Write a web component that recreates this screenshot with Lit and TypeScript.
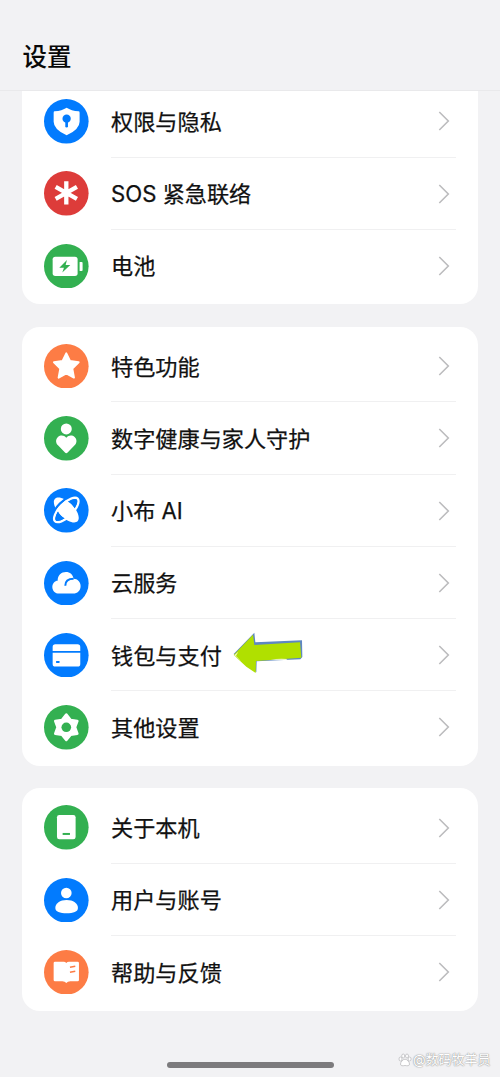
import { LitElement, html, css, svg } from "lit";
import { customElement, property } from "lit/decorators.js";

const BLUE = "#027bfe";
const GREEN = "#33b051";
const RED = "#dd3c3a";
const ORANGE = "#fd7c45";

const glyphs: Record<string, { color: string; art: unknown }> = {
  privacy: {
    color: BLUE,
    art: svg`<path d="M68 26 Q82 35 104 37 Q107 37 107 41 V68 Q107 91 68 109 Q29 91 29 68 V41 Q29 37 32 37 Q54 35 68 26Z"/>
      <circle cx="68" cy="59" r="12.5" fill=${BLUE}/><path d="M68 62V82" stroke=${BLUE} stroke-width="8" stroke-linecap="round"/>`,
  },
  sos: {
    color: RED,
    art: svg`<path d="M67 31V101M35 48L99 84M99 48L35 84" stroke="#fff" stroke-width="13"/>`,
  },
  battery: {
    color: GREEN,
    art: svg`<rect x="26" y="38" width="75" height="58" rx="8"/><path d="M107 54H113Q116 54 116 57V78Q116 81 113 81H107Z"/>
      <path d="M69 48L46 71H60L55 86L79 63H65Z" fill=${GREEN}/>`,
  },
  star: {
    color: ORANGE,
    art: svg`<path d="M67 28L78 51L104 55L85 74L90 101L67 88L44 101L49 74L30 55L56 51Z" stroke="#fff" stroke-width="6" stroke-linejoin="round"/>`,
  },
  family: {
    color: GREEN,
    art: svg`<circle cx="67" cy="39" r="16.5"/><path d="M67 65C60 57 49 57 42 63C34 71 35 81 42 88L63 110Q67 114 71 110L92 88C99 81 100 71 92 63C85 57 74 57 67 65Z"/>`,
  },
  assistant: {
    color: BLUE,
    art: svg`<g transform="rotate(45 67 66)">
        <path d="M19 66C19 55 38 43 67 43S115 55 115 66C115 77 96 89 67 89S19 77 19 66Z"/>
      </g>
      <g transform="rotate(-45 67 66)">
        <path d="M14 61C24 47 43 39 67 39S110 47 120 61" stroke=${BLUE} stroke-width="7" fill="none"/>
        <path d="M19 66C19 56 39 46 67 46S115 56 115 66S95 86 67 86S19 76 19 66Z" stroke="#fff" stroke-width="7" fill="none"/>
        <path d="M23 66Q25 57 46 52Q40 66 46 80Q25 75 23 66ZM111 66Q109 57 88 52Q94 66 88 80Q109 75 111 66Z" fill=${BLUE}/>
      </g>`,
  },
  cloud: {
    color: BLUE,
    art: svg`<path d="M46 98C33 98 25 89 25 78C25 67 33 59 41 59C41 43 52 33 66 33C78 33 87 41 89 53C101 53 110 63 110 75C110 89 100 98 88 98Z"/>
      <path d="M64 74C64 59 74 53 89 53" stroke=${BLUE} stroke-width="6" fill="none"/>`,
  },
  wallet: {
    color: BLUE,
    art: svg`<path d="M26 54V42Q26 34 34 34H101Q109 34 109 42V54ZM26 59H109V93Q109 101 101 101H34Q26 101 26 93Z"/>
      <rect x="36" y="84" width="11" height="6" rx="2" fill=${BLUE}/>`,
  },
  gear: {
    color: GREEN,
    art: svg`<path d="M67 29L80 45L100 48L93 67L100 86L80 89L67 105L54 89L34 86L41 67L34 48L54 45Z" stroke="#fff" stroke-width="8" stroke-linejoin="round"/>
      <circle cx="67" cy="67" r="14.5" fill=${GREEN}/>`,
  },
  device: {
    color: GREEN,
    art: svg`<rect x="39" y="30" width="56" height="73" rx="7"/><rect x="56" y="84" width="22" height="6" fill=${GREEN}/>`,
  },
  user: {
    color: BLUE,
    art: svg`<circle cx="67" cy="45" r="16"/><path d="M34 90C34 76 48 66 68 66S102 76 102 90C102 101 88 106 68 106S34 101 34 90Z"/>`,
  },
  help: {
    color: ORANGE,
    art: svg`<path d="M33 35H59Q64 35 67 39Q70 35 75 35H101Q105 35 105 39V90Q105 94 101 94H79Q71 94 67 99Q63 94 55 94H33Q29 94 29 90V39Q29 35 33 35Z"/>
      <path d="M78 52L94 49M78 67L94 64" stroke=${ORANGE} stroke-width="5"/>`,
  },
};

@customElement("settings-row")
class SettingsRow extends LitElement {
  @property() icon = "";
  @property() label = "";

  static styles = css`
    :host { display: flex; align-items: center; height: 72.25px; padding-left: 22.2px; }
    .badge { width: 44.6px; height: 44.6px; flex: none; margin-right: 22px; }
    .body {
      flex: 1; height: 100%; margin-right: 22px; box-sizing: border-box;
      display: flex; align-items: center; border-bottom: 1px solid #f0f0f1;
    }
    :host([last]) .body { border-bottom-color: transparent; }
    .label { font-size: 22.15px; line-height: 32px; padding-top: 2px; white-space: pre; color: #111; font-weight: 400; -webkit-text-stroke: 0.25px #111; }
    .chevron { width: 12px; height: 20px; margin: 1px 5.4px 0 auto; flex: none; }
  `;

  render() {
    const glyph = glyphs[this.icon];
    return html`
      <svg class="badge" viewBox="0 0 134 134" fill="#fff">
        <circle cx="67" cy="67" r="67" fill=${glyph.color} />${glyph.art}
      </svg>
      <div class="body">
        <span class="label">${this.label}</span><slot></slot>
        <svg class="chevron" viewBox="0 0 12 20" fill="none" stroke="#bcbcbe" stroke-width="1.6">
          <path d="M1.3 1L10.3 10L1.3 19" />
        </svg>
      </div>`;
  }
}

const groups: [string, string][][] = [
  [["privacy", "权限与隐私"], ["sos", "SOS 紧急联络"], ["battery", "电池"]],
  [
    ["star", "特色功能"], ["family", "数字健康与家人守护"], ["assistant", "小布 AI"],
    ["cloud", "云服务"], ["wallet", "钱包与支付"], ["gear", "其他设置"],
  ],
  [["device", "关于本机"], ["user", "用户与账号"], ["help", "帮助与反馈"]],
];

@customElement("app-root")
class AppRoot extends LitElement {
  static styles = css`
    :host {
      display: flex; flex-direction: column; height: 1077px; position: relative; overflow: hidden;
      background: #f2f2f4; color: #111;
      font-family: Inter, "Noto Sans CJK SC", sans-serif;
    }
    .header {
      height: 91px; flex: none; box-sizing: border-box; border-bottom: 1px solid #e9e9eb;
      padding: 39px 22.5px 0;
    }
    .title { margin: 0; font-size: 24.5px; line-height: 36px; font-weight: 500; color: #080808; }
    .list { flex: 1; min-height: 0; overflow: hidden; padding: 0 22.3px; }
    .group { background: #fff; border-radius: 18px; padding: 3.3px 0 2.3px; margin-bottom: 22.4px; }
    .group:first-child { margin-top: -9px; border-radius: 0 0 18px 18px; }
    .arrow { width: 70px; height: 42px; flex: none; margin-left: 11.6px; margin-top: -3px; }
    .home { position: absolute; left: 167px; top: 1062px; width: 166.5px; height: 5.5px; border-radius: 3px; background: #7c7b7d; }
    .credit {
      position: absolute; left: 398px; top: 1051px; display: flex; align-items: center; gap: 1px;
      font-size: 13px; line-height: 17px; color: #fff; white-space: nowrap;
      text-shadow: 0 0 1px #999, 0 0 1px #aaa, 0 0 2px #bbb;
    }
    .paw { width: 14px; height: 14px; }
  `;

  render() {
    return html`
      <header class="header"><h1 class="title">设置</h1></header>
      <main class="list">
        ${groups.map((rows) => html`<section class="group">
          ${rows.map(([icon, label], i) => html`<settings-row icon=${icon} label=${label} ?last=${i === rows.length - 1}>${icon === "wallet" ? this.arrow() : ""}</settings-row>`)}
        </section>`)}
      </main>
      <div class="home"></div>
      <div class="credit">
        <svg class="paw" viewBox="0 0 14 14" fill="#fff" stroke="#b5b5b7" stroke-width=".7">
          <ellipse cx="2.5" cy="6" rx="1.5" ry="2" /><ellipse cx="5.2" cy="3" rx="1.5" ry="2" />
          <ellipse cx="9" cy="3" rx="1.5" ry="2" /><ellipse cx="11.6" cy="6" rx="1.5" ry="2" />
          <path d="M7 6.2C9 6.2 11.5 9 11.5 11S9.5 13 7 12.5C4.5 13 2.5 13 2.5 11S5 6.2 7 6.2Z" />
        </svg><span>@数码牧羊员</span>
      </div>`;
  }

  private arrow() {
    return html`<svg class="arrow" viewBox="0 0 210 126">
      <path d="M2 66L64 2L67 31L207 25L208 75L202 82L71 88L70 121Z" fill="#5e87c2" />
      <path d="M2 69L60 8L64 39L201 31L205 77L69 87L68 123L40 104Z" fill="#b0e000" />
      <path d="M3 70L16 59L9 72L25 88Z" fill="#ecf6bd" />
      <path d="M112 83Q137 79 163 81L160 84Z" fill="#f2f9c9" />
    </svg>`;
  }
}
